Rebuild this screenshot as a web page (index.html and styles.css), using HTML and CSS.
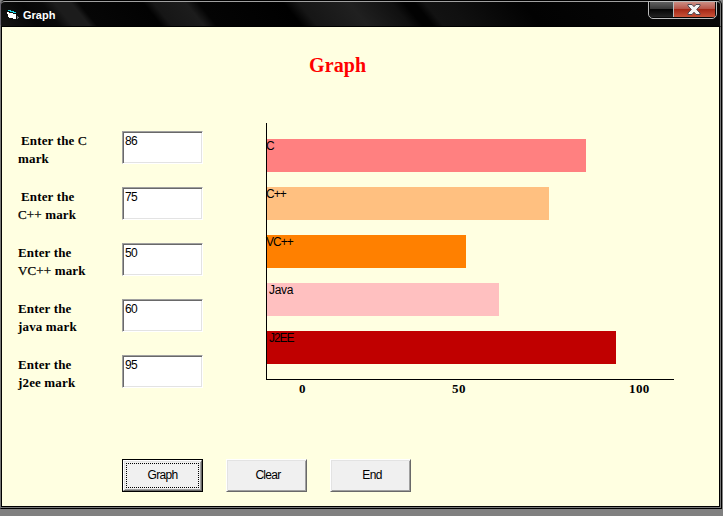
FILE: index.html
```html
<!DOCTYPE html>
<html lang="en">
<head>
<meta charset="utf-8">
<title>Graph</title>
<link rel="stylesheet" href="styles.css">
</head>
<body>
<div class="window">
  <header class="titlebar">
    <svg class="app-icon" width="13" height="11" viewBox="0 0 13 11" shape-rendering="crispEdges">
      <path d="M0 3h2v1h4v1h3v5H6V9H2V8H1V5H0z" fill="#fff"/>
      <path d="M1 1h3v1h3v1h2v1H6V3H3V2H1z" fill="#18d8e8"/>
      <path d="M10 7h1v1h1v1h-1v1h-1z" fill="#777"/>
    </svg>
    <span class="caption">Graph</span>
    <div class="controls">
      <span class="ctl-min"></span>
      <span class="ctl-close">
        <svg width="14" height="11" viewBox="0 0 14 11">
          <path d="M1 .5h4l2 2.200 2-2.200h4v1.400L9.700 5.500 13 9v1.500H9L7 8.200 5 10.500H1V9l3.300-3.500L1 1.900z" fill="#f4f4f4" stroke="#4a4650"/>
        </svg>
      </span>
    </div>
  </header>
  <main class="client">
    <h1 class="title">Graph</h1>
    <div class="content">
      <form class="marks">
        <label class="indent">Enter the <i>C</i><br><span>mark</span></label><input value="86">
        <label class="indent">Enter the<br><span><i>C++</i> mark</span></label><input value="75">
        <label>Enter the<br><i>VC++</i> mark</label><input value="50">
        <label>Enter the<br>java mark</label><input value="60">
        <label>Enter the<br>j2ee mark</label><input value="95">
      </form>
      <section class="chart">
        <div class="plot">
          <div class="bar c"><span>C</span></div>
          <div class="bar cpp"><span>C++</span></div>
          <div class="bar vcpp"><span>VC++</span></div>
          <div class="bar java"><span>Java</span></div>
          <div class="bar j2ee"><span>J2EE</span></div>
        </div>
        <div class="ticks"><span>0</span><span>50</span><span>100</span></div>
      </section>
    </div>
    <div class="buttons">
      <div class="default"><button type="button"><span>Graph</span></button></div>
      <button type="button">Clear</button>
      <button type="button">End</button>
    </div>
  </main>
</div>
</body>
</html>
```
FILE: styles.css
```css
* { box-sizing: border-box; }
body {
  margin: 0;
  height: 516px;
  overflow: hidden;
  background: #808080;
}
.window {
  width: 722px;
  height: 509px;
  display: flex;
  flex-direction: column;
  background: #000;
  border: 1px solid #000;
  border-left-color: #686470;
  border-radius: 5px 5px 0 0;
}
.titlebar {
  position: relative;
  z-index: 1;
  height: 26px;
  flex: none;
  display: flex;
  border-top: 1px solid #a0a0a0;
  border-right: 1px solid #777;
  border-bottom: 1px solid #000;
  border-radius: 4px 4px 0 0;
  background: linear-gradient(51deg, #151515 0, #060606 30px, #0a0a0a 46px, #1c1c1c 56px, #1c1c1c 69px, #060606 75px, #020202 125px, #161616 133px, #1c1c1c 158px, #040404 168px, #000 234px, #161616 246px, #202020 285px, #101010 318px, #020202 328px, #020202 336px, #121212 344px, #101010 362px, #020202 420px, #080808 570px);
}
.app-icon { margin: 7px 3px 0 6px; }
.caption {
  color: #fff;
  font: bold 11px/26px "Liberation Sans", Arial, sans-serif;
}
.controls {
  display: flex;
  width: 69px;
  height: 18px;
  margin: -1px 3px 0 auto;
  padding: 0 1px 1px;
  border: 1px solid #bbb;
  border-radius: 0 0 5px 5px;
  overflow: hidden;
}
.ctl-min {
  width: 24px;
  border-right: 1px solid #bbb;
  background: linear-gradient(#606060, #393939 45%, #050505 50%, #222);
}
.ctl-close {
  flex: 1;
  display: flex;
  justify-content: center;
  padding: 2px 2px 0 0;
  background: linear-gradient(#cb8d83, #b95649 45%, #a52917 50%, #c95238);
}
.client {
  width: 717px;
  height: 479px;
  margin-left: 1px;
  background: #ffffe1;
  outline: 1px solid #000;
  box-shadow: 0 0 0 2px #777;
}
.title {
  margin: 0;
  padding: 26px 0 0 307px;
  height: 96px;
  color: #f00;
  font: bold 20px/24px "Liberation Serif", serif;
  letter-spacing: .1px;
}
.content { display: flex; height: 336px; }
.marks {
  width: 264px;
  padding: 8px 0 0 16px;
  display: grid;
  grid-template-columns: 104px 81px;
  grid-auto-rows: 56px;
}
label {
  padding-top: 1px;
  white-space: nowrap;
  font: bold 13px/18px "Liberation Serif", serif;
  letter-spacing: .15px;
}
label i { font-style: normal; font-weight: normal; -webkit-text-stroke: .25px #000; }
.indent { text-indent: 3px; }
input {
  width: 81px;
  height: 33px;
  padding: 0 1px 13px 2px;
  border: 1px solid;
  border-color: #a0a0a0 #fff #fff #a0a0a0;
  box-shadow: inset 1px 1px #696969, inset -1px -1px #e3e3e3;
  border-radius: 0;
  background: #fff;
  font: 12px "Liberation Sans", Arial, sans-serif;
  letter-spacing: -.6px;
}
.chart { width: 408px; }
.plot {
  height: 257px;
  padding-top: 16px;
  display: flex;
  flex-direction: column;
  gap: 15px;
  border-left: 1px solid #000;
  border-bottom: 1px solid #000;
}
.bar {
  height: 33px;
  font: 12px/14px "Liberation Sans", Arial, sans-serif;
}
.bar span { margin-left: -1px; letter-spacing: -1px; }
.c { width: 319px; background: #ff8080; }
.cpp { width: 282px; background: #ffc080; }
.vcpp { width: 199px; background: #ff8000; }
.java { width: 232px; background: #ffc0c0; }
.j2ee { width: 349px; background: #c00000; }
.bar.java span { margin-left: 2px; letter-spacing: -.3px; }
.bar.j2ee span { margin-left: 2px; letter-spacing: -1.1px; }
.ticks {
  display: grid;
  grid-template-columns: 153px 177px 1fr;
  padding-left: 33px;
  font: bold 13px/18px "Liberation Serif", serif;
  letter-spacing: .4px;
}
.buttons {
  display: flex;
  gap: 23px;
  padding-left: 120px;
}
button {
  width: 81px;
  height: 33px;
  padding: 0 0 2px 3px;
  border: 1px solid;
  border-color: #fff #696969 #696969 #fff;
  border-radius: 0;
  box-shadow: inset 1px 1px #e3e3e3, inset -1px -1px #a0a0a0;
  background: #f0f0f0;
  color: #000;
  font: 12px "Liberation Sans", Arial, sans-serif;
  letter-spacing: -.7px;
}
.default { width: 81px; height: 33px; border: 1px solid #000; }
.default button { width: 79px; height: 31px; padding: 2px; }
.default span {
  display: block;
  height: 25px;
  border: 1px dotted #000;
  line-height: 23px;
}
```
